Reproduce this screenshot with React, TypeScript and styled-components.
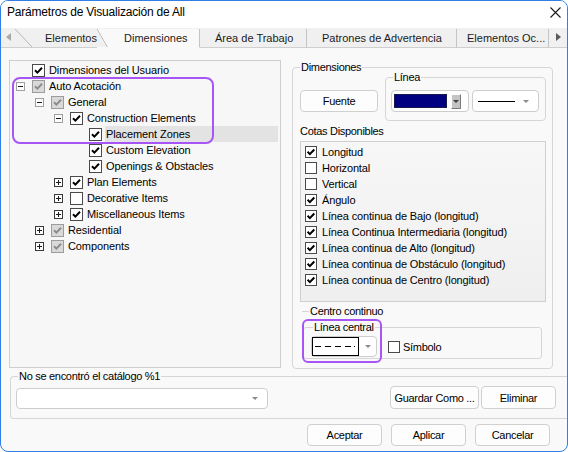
import React from "react";
import styled, { createGlobalStyle, css } from "styled-components";

const GlobalStyle = createGlobalStyle`
  html, body { margin: 0; padding: 0; background: #ffffff; }
  body { font-family: "Liberation Sans", Arial, sans-serif; }
  * { box-sizing: border-box; }
`;

const Window = styled.div`
  position: relative;
  width: 568px;
  height: 452px;
  border: 1px solid #2f7fe6;
  border-radius: 8px;
  background: #f9f9f9;
  overflow: hidden;
  display: flex;
  flex-direction: column;
  color: #000;
`;

const TitleBar = styled.div`
  flex: none;
  height: 27px;
  background: #ffffff;
  display: flex;
  align-items: flex-start;
  justify-content: space-between;
  padding: 4px 6px 0 6px;
  font-size: 12px;
  line-height: 14px;
  letter-spacing: -0.2px;
`;

const CloseIcon = styled.svg`
  margin-top: 2px;
`;

const TabStrip = styled.div`
  flex: none;
  height: 20px;
  background: #f0f0f0;
  display: flex;
  align-items: flex-end;
`;

const ArrowSlot = styled.div<{ $w: number; $right?: boolean }>`
  flex: none;
  width: ${(p) => p.$w}px;
  height: 19px;
  border-bottom: 1px solid #cfcfcf;
  display: flex;
  align-items: center;
  justify-content: center;
  padding-bottom: 3px;
  ${(p) =>
    p.$right &&
    css`
      border-left: 1px solid #c4c4c4;
    `}
`;

const Triangle = styled.span<{ $dir: "left" | "right"; $color: string }>`
  width: 0;
  height: 0;
  border-top: 4px solid transparent;
  border-bottom: 4px solid transparent;
  ${(p) =>
    p.$dir === "left"
      ? css`
          border-right: 5px solid ${p.$color};
        `
      : css`
          border-left: 5px solid ${p.$color};
        `}
`;

const Tab = styled.div<{ $w: number; $pl: number; $active?: boolean; $slant?: "line" | "fill"; $border?: boolean }>`
  position: relative;
  flex: none;
  width: ${(p) => p.$w}px;
  height: 19px;
  padding-left: ${(p) => p.$pl}px;
  display: flex;
  align-items: center;
  font-size: 11px;
  color: #1b1b1b;
  white-space: nowrap;
  overflow: hidden;
  background: ${(p) => (p.$active ? "#f9f9f9" : "#f0f0f0")};
  border-bottom: 1px solid ${(p) => (p.$active ? "transparent" : "#cfcfcf")};
  border-right: ${(p) => (p.$border ? "1px solid #c4c4c4" : "none")};
  &::before {
    content: "";
    display: ${(p) => (p.$slant ? "block" : "none")};
    position: absolute;
    left: 0;
    top: 0;
    height: 19px;
    width: ${(p) => (p.$slant === "line" ? 18 : 11)}px;
    background: ${(p) =>
      p.$slant === "line"
        ? "linear-gradient(to top right, transparent calc(50% - 0.7px), #b3b3b3 50%, transparent calc(50% + 0.7px))"
        : "linear-gradient(to top right, #f0f0f0 calc(50% - 0.7px), #b3b3b3 50%, #f9f9f9 calc(50% + 0.7px))"};
  }
`;

const Body = styled.div`
  flex: 1;
  display: flex;
  flex-direction: column;
  padding: 12px 0 0 8px;
`;

const MainRow = styled.div`
  display: flex;
  gap: 11px;
  height: 309px;
`;

const Tree = styled.div`
  flex: none;
  width: 272px;
  height: 308px;
  border: 1px solid #cfcfcf;
  background: #f7f7f7;
  padding-top: 1px;
  display: flex;
  flex-direction: column;
`;

const TreeRow = styled.div<{ $level: number }>`
  height: 16px;
  display: flex;
  align-items: center;
  padding-left: ${(p) => 6 + p.$level * 19}px;
  font-size: 11px;
  letter-spacing: -0.1px;
  white-space: nowrap;
`;

const ExpSlot = styled.div`
  flex: none;
  width: 16px;
  height: 16px;
  display: flex;
  align-items: center;
`;

const Expander = styled.div<{ $plus?: boolean }>`
  position: relative;
  width: 9px;
  height: 9px;
  border: 1px solid ${(p) => (p.$plus ? "#3a3a3a" : "#a0a0a0")};
  background: #fdfdfd;
  &::before {
    content: "";
    position: absolute;
    left: 1px;
    top: 3px;
    width: 5px;
    height: 1px;
    background: #1a1a1a;
  }
  &::after {
    content: "";
    display: ${(p) => (p.$plus ? "block" : "none")};
    position: absolute;
    left: 3px;
    top: 1px;
    width: 1px;
    height: 5px;
    background: #1a1a1a;
  }
`;

const TreeLabel = styled.span<{ $selected?: boolean }>`
  height: 16px;
  line-height: 16px;
  padding-left: 1px;
  margin-left: 3px;
  ${(p) =>
    p.$selected &&
    css`
      flex: 1;
      margin-right: 2px;
      background: #e3e3e3;
    `}
`;

type CheckState = "on" | "off" | "gray";

const CheckSvg = styled.svg`
  flex: none;
  display: block;
`;

const CheckBox: React.FC<{ state: CheckState; size?: number }> = ({ state, size = 13 }) => {
  const gray = state === "gray";
  const s = size;
  return (
    <CheckSvg width={s} height={s} viewBox={`0 0 ${s} ${s}`}>
      <rect
        x={0.5}
        y={0.5}
        width={s - 1}
        height={s - 1}
        fill={gray ? "#d9d9d9" : "#ffffff"}
        stroke={gray ? "#9c9c9c" : "#4a4a4a"}
      />
      {state !== "off" && (
        <path
          d={s === 13 ? "M3 6.2 L5.4 8.6 L10 3.8" : "M2.6 5.8 L4.9 8.1 L9.3 3.5"}
          fill="none"
          stroke={gray ? "#8c8c8c" : "#000000"}
          strokeWidth={2}
        />
      )}
    </CheckSvg>
  );
};

const Group = styled.div`
  position: relative;
  border: 1px solid #d6d6d6;
  border-radius: 4px;
`;

const Legend = styled.span<{ $left: number }>`
  position: absolute;
  top: -7px;
  left: ${(p) => p.$left}px;
  padding: 0 1px;
  background: #f9f9f9;
  font-size: 11px;
  line-height: 13px;
  letter-spacing: -0.3px;
  white-space: nowrap;
`;

const DimGroup = styled(Group)`
  flex: none;
  margin-top: 7px;
  width: 261px;
  height: 302px;
  padding: 9px 6px 0 7px;
  display: flex;
  flex-direction: column;
`;

const TopRow = styled.div`
  display: flex;
  align-items: flex-start;
  gap: 7px;
`;

const Button = styled.button<{ $w: number; $h?: number }>`
  flex: none;
  width: ${(p) => p.$w}px;
  height: ${(p) => p.$h ?? 22}px;
  padding: 0;
  border: 1px solid #d0d0d0;
  border-radius: 4px;
  background: #fdfdfd;
  font-family: "Liberation Sans", Arial, sans-serif;
  font-size: 11px;
  letter-spacing: -0.3px;
  color: #000;
  white-space: nowrap;
`;

const FuenteButton = styled(Button)`
  margin-top: 13px;
`;

const LineaGroup = styled(Group)`
  width: 161px;
  height: 44px;
  padding: 12px 0 0 5px;
  display: flex;
  gap: 3px;
`;

const Combo = styled.div<{ $w: number; $h?: number }>`
  flex: none;
  width: ${(p) => p.$w}px;
  height: ${(p) => p.$h ?? 22}px;
  border: 1px solid #cdcdcd;
  border-radius: 4px;
  background: #ffffff;
  display: flex;
  align-items: center;
`;

const ColorCombo = styled(Combo)`
  padding-left: 2px;
  gap: 4px;
`;

const Swatch = styled.div<{ $color: string }>`
  width: 53px;
  height: 14px;
  background: ${(p) => p.$color};
  border: 1px solid #1a1a4a;
`;

const DropBtn = styled.div`
  width: 10px;
  height: 15px;
  background: #c4c4c4;
  border: 1px solid;
  border-color: #ffffff #7a7a7a #7a7a7a #ffffff;
  display: flex;
  align-items: center;
  justify-content: center;
`;

const DownArrow = styled.span<{ $color?: string }>`
  flex: none;
  width: 0;
  height: 0;
  border-left: 3px solid transparent;
  border-right: 3px solid transparent;
  border-top: 3px solid ${(p) => p.$color ?? "#8a8a8a"};
`;

const LineCombo = styled(Combo)`
  padding: 0 9px 0 5px;
  justify-content: space-between;
`;

const LineSample = styled.div`
  width: 37px;
  height: 1px;
  background: #000;
`;

const Label = styled.div`
  margin-top: 3px;
  font-size: 11px;
  line-height: 14px;
  letter-spacing: -0.3px;
`;

const ListBox = styled.div`
  margin-top: 3px;
  width: 246px;
  height: 161px;
  border: 1px solid #cfcfcf;
  background: linear-gradient(#f7f7f7, #efefef);
  padding: 2px 0 0 4px;
  display: flex;
  flex-direction: column;
`;

const ListItem = styled.div`
  height: 16px;
  display: flex;
  align-items: center;
  gap: 5px;
  font-size: 11px;
  letter-spacing: -0.15px;
  white-space: nowrap;
`;

const CentroSection = styled.div`
  margin-top: 3px;
  margin-left: 2px;
  width: 240px;
  display: flex;
  flex-direction: column;
`;

const SectionTitle = styled.div`
  height: 13px;
  display: flex;
  align-items: center;
  font-size: 11px;
  line-height: 13px;
  letter-spacing: -0.3px;
  &::before {
    content: "";
    width: 7px;
    height: 1px;
    background: #d6d6d6;
    margin-right: 1px;
  }
`;

const CentralBox = styled(Group)`
  margin: 9px 0 0 1px;
  width: 239px;
  height: 32px;
  border-radius: 3px;
  padding: 7px 0 0 7px;
  display: flex;
  align-items: center;
  align-self: flex-start;
`;

const CentralRow = styled.div`
  display: flex;
  align-items: center;
  font-size: 11px;
  letter-spacing: -0.3px;
`;

const DashCombo = styled(Combo)`
  padding-left: 0;
`;

const DashSample = styled.div`
  width: 47px;
  height: 19px;
  border: 1px solid #000;
  display: flex;
  align-items: center;
  justify-content: center;
`;

const ArrowCell = styled.div`
  flex: 1;
  display: flex;
  justify-content: center;
`;

const SymbolCheck = styled.div`
  margin-left: 11px;
  display: flex;
  align-items: center;
  gap: 3px;
`;

const CatalogGroup = styled(Group)`
  margin: 7px 0 0 1px;
  width: 557px;
  height: 43px;
  border-right: none;
  border-radius: 4px 0 0 4px;
  padding: 11px 11px 0 5px;
  display: flex;
  align-items: flex-start;
`;

const CatalogCombo = styled(Combo)`
  justify-content: flex-end;
  padding-right: 9px;
`;

const Spacer = styled.div`
  flex: 1;
`;

const RightButtons = styled.div`
  display: flex;
  gap: 2px;
  margin-top: -2px;
`;

const Footer = styled.div`
  margin-top: 5px;
  display: flex;
  justify-content: flex-end;
  gap: 9px;
  padding-right: 17px;
`;

const Annotation = styled.div<{ $x: number; $y: number; $w: number; $h: number; $r: number }>`
  position: absolute;
  left: ${(p) => p.$x}px;
  top: ${(p) => p.$y}px;
  width: ${(p) => p.$w}px;
  height: ${(p) => p.$h}px;
  border: 2px solid #a855f7;
  border-radius: ${(p) => p.$r}px;
  pointer-events: none;
`;

type TreeItem = { level: number; exp?: "plus" | "minus"; check: CheckState; label: string; selected?: boolean };

const treeItems: TreeItem[] = [
  { level: 0, check: "on", label: "Dimensiones del Usuario" },
  { level: 0, exp: "minus", check: "gray", label: "Auto Acotación" },
  { level: 1, exp: "minus", check: "gray", label: "General" },
  { level: 2, exp: "minus", check: "on", label: "Construction Elements" },
  { level: 3, check: "on", label: "Placement Zones", selected: true },
  { level: 3, check: "on", label: "Custom Elevation" },
  { level: 3, check: "on", label: "Openings & Obstacles" },
  { level: 2, exp: "plus", check: "on", label: "Plan Elements" },
  { level: 2, exp: "plus", check: "off", label: "Decorative Items" },
  { level: 2, exp: "plus", check: "on", label: "Miscellaneous Items" },
  { level: 1, exp: "plus", check: "gray", label: "Residential" },
  { level: 1, exp: "plus", check: "gray", label: "Components" },
];

const listItems: { on: boolean; label: string }[] = [
  { on: true, label: "Longitud" },
  { on: false, label: "Horizontal" },
  { on: false, label: "Vertical" },
  { on: true, label: "Ángulo" },
  { on: true, label: "Línea continua de Bajo (longitud)" },
  { on: true, label: "Línea Continua Intermediaria (longitud)" },
  { on: true, label: "Línea continua de Alto (longitud)" },
  { on: true, label: "Línea continua de Obstáculo (longitud)" },
  { on: true, label: "Línea continua de Centro (longitud)" },
];

export default function App() {
  return (
    <>
      <GlobalStyle />
      <Window>
        <TitleBar>
          <span>Parámetros de Visualización de All</span>
          <CloseIcon width="11" height="11" viewBox="0 0 11 11">
            <path d="M0.5 0.5 L10.5 10.5 M10.5 0.5 L0.5 10.5" stroke="#1a1a1a" strokeWidth="1.1" />
          </CloseIcon>
        </TitleBar>
        <TabStrip>
          <ArrowSlot $w={14}>
            <Triangle $dir="left" $color="#a8a8a8" />
          </ArrowSlot>
          <Tab $w={82} $pl={30} $slant="line">Elementos</Tab>
          <Tab $w={103} $pl={27} $active $slant="fill" $border>
            Dimensiones
          </Tab>
          <Tab $w={107} $pl={15} $border>
            Área de Trabajo
          </Tab>
          <Tab $w={150} $pl={15} $border>
            Patrones de Advertencia
          </Tab>
          <Tab $w={91} $pl={10}>
            Elementos Oc...
          </Tab>
          <ArrowSlot $w={19} $right>
            <Triangle $dir="right" $color="#5a5a5a" />
          </ArrowSlot>
        </TabStrip>
        <Body>
          <MainRow>
            <Tree>
              {treeItems.map((it) => (
                <TreeRow key={it.label} $level={it.level}>
                  <ExpSlot>{it.exp && <Expander $plus={it.exp === "plus"} />}</ExpSlot>
                  <CheckBox state={it.check} />
                  <TreeLabel $selected={it.selected}>{it.label}</TreeLabel>
                </TreeRow>
              ))}
            </Tree>
            <DimGroup>
              <Legend $left={7}>Dimensiones</Legend>
              <TopRow>
                <FuenteButton $w={78}>Fuente</FuenteButton>
                <LineaGroup>
                  <Legend $left={7}>Línea</Legend>
                  <ColorCombo $w={78}>
                    <Swatch $color="#000080" />
                    <DropBtn>
                      <DownArrow $color="#404040" />
                    </DropBtn>
                  </ColorCombo>
                  <LineCombo $w={67}>
                    <LineSample />
                    <DownArrow />
                  </LineCombo>
                </LineaGroup>
              </TopRow>
              <Label>Cotas Disponibles</Label>
              <ListBox>
                {listItems.map((it) => (
                  <ListItem key={it.label}>
                    <CheckBox state={it.on ? "on" : "off"} size={12} />
                    <span>{it.label}</span>
                  </ListItem>
                ))}
              </ListBox>
              <CentroSection>
                <SectionTitle>Centro continuo</SectionTitle>
                <CentralBox>
                  <Legend $left={9}>Línea central</Legend>
                  <CentralRow>
                    <DashCombo $w={66} $h={21}>
                      <DashSample>
                        <svg width="41" height="3" viewBox="0 0 41 3">
                          <path d="M0 1.5 H6 M10 1.5 H16 M20 1.5 H26 M30 1.5 H36 M39 1.5 H40" stroke="#000" strokeWidth="1" />
                        </svg>
                      </DashSample>
                      <ArrowCell>
                        <DownArrow />
                      </ArrowCell>
                    </DashCombo>
                    <SymbolCheck>
                      <CheckBox state="off" size={12} />
                      <span>Símbolo</span>
                    </SymbolCheck>
                  </CentralRow>
                </CentralBox>
              </CentroSection>
            </DimGroup>
          </MainRow>
          <CatalogGroup>
            <Legend $left={7}>No se encontró el catálogo %1</Legend>
            <CatalogCombo $w={252} $h={21}>
              <DownArrow />
            </CatalogCombo>
            <Spacer />
            <RightButtons>
              <Button $w={89} $h={23}>
                Guardar Como ...
              </Button>
              <Button $w={75} $h={23}>
                Eliminar
              </Button>
            </RightButtons>
          </CatalogGroup>
          <Footer>
            <Button $w={75}>Aceptar</Button>
            <Button $w={75}>Aplicar</Button>
            <Button $w={75}>Cancelar</Button>
          </Footer>
        </Body>
        <Annotation $x={11} $y={76} $w={202} $h={67} $r={8} />
        <Annotation $x={301} $y={318} $w={80} $h={44} $r={6} />
      </Window>
    </>
  );
}
